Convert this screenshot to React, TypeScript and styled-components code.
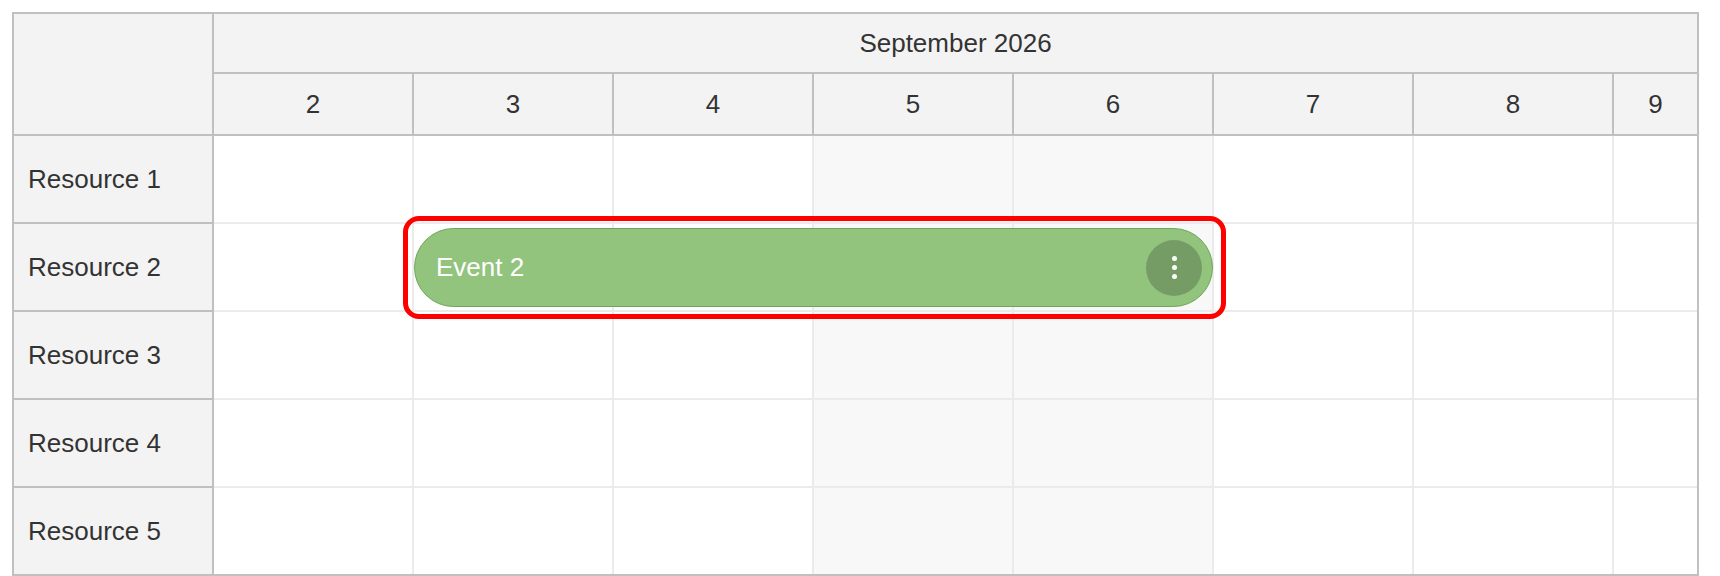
import React from "react";
import styled, { createGlobalStyle } from "styled-components";

const days = [2, 3, 4, 5, 6, 7, 8, 9];
const weekend = [5, 6];
const resources = ["Resource 1", "Resource 2", "Resource 3", "Resource 4", "Resource 5"];

const GlobalStyle = createGlobalStyle`
  body {
    margin: 0;
    font-family: "Liberation Sans", Arial, sans-serif;
    color: #333333;
    background: #ffffff;
  }
`;

export default function App() {
  return (
    <>
      <GlobalStyle />
      <Page>
        <Scheduler>
          <ResourceColumn>
            <Corner />
            {resources.map((name, index) => (
              <ResourceCell key={name} last={index === resources.length - 1}>
                {name}
              </ResourceCell>
            ))}
          </ResourceColumn>
          <Timeline>
            <MonthHeader>September 2026</MonthHeader>
            <DayHeaderRow>
              {days.map((day, index) => (
                <DayHeader key={day} last={index === days.length - 1}>
                  {day}
                </DayHeader>
              ))}
            </DayHeaderRow>
            <Body>
              {resources.map((name, rowIndex) => (
                <GridRow key={name} last={rowIndex === resources.length - 1}>
                  {days.map((day, index) => (
                    <GridCell
                      key={day}
                      weekend={weekend.includes(day)}
                      last={index === days.length - 1}
                    />
                  ))}
                </GridRow>
              ))}
              <Highlight />
              <Event>
                <EventText>Event 2</EventText>
                <MoreButton>
                  <Dot />
                  <Dot />
                  <Dot />
                </MoreButton>
              </Event>
            </Body>
          </Timeline>
        </Scheduler>
      </Page>
    </>
  );
}

const Page = styled.div`
  padding: 12px 0 0 12px;
`;

const Scheduler = styled.div`
  display: flex;
  width: 1687px;
  height: 564px;
  box-sizing: border-box;
  border: 2px solid #c0c0c0;
`;

const ResourceColumn = styled.div`
  display: flex;
  flex-direction: column;
  width: 200px;
  flex-shrink: 0;
  box-sizing: border-box;
  border-right: 2px solid #c0c0c0;
  background: #f3f3f3;
`;

const Corner = styled.div`
  height: 120px;
  border-bottom: 2px solid #c0c0c0;
`;

const ResourceCell = styled.div<{ last: boolean }>`
  display: flex;
  align-items: center;
  height: 86px;
  padding-left: 14px;
  font-size: 26px;
  border-bottom: ${(props) => (props.last ? "none" : "2px solid #c0c0c0")};
`;

const Timeline = styled.div`
  display: flex;
  flex-direction: column;
  flex: 1;
  min-width: 0;
`;

const MonthHeader = styled.div`
  display: flex;
  align-items: center;
  justify-content: center;
  height: 58px;
  font-size: 26px;
  background: #f3f3f3;
  border-bottom: 2px solid #c0c0c0;
`;

const DayHeaderRow = styled.div`
  display: flex;
  height: 60px;
  background: #f3f3f3;
  border-bottom: 2px solid #c0c0c0;
`;

const DayHeader = styled.div<{ last: boolean }>`
  display: flex;
  align-items: center;
  justify-content: center;
  box-sizing: border-box;
  width: ${(props) => (props.last ? "auto" : "200px")};
  flex: ${(props) => (props.last ? "1" : "0 0 auto")};
  font-size: 26px;
  border-right: ${(props) => (props.last ? "none" : "2px solid #c0c0c0")};
`;

const Body = styled.div`
  position: relative;
  display: flex;
  flex-direction: column;
  flex: 1;
`;

const GridRow = styled.div<{ last: boolean }>`
  display: flex;
  height: 86px;
  border-bottom: ${(props) => (props.last ? "none" : "2px solid #ebebeb")};
`;

const GridCell = styled.div<{ weekend: boolean; last: boolean }>`
  box-sizing: border-box;
  width: ${(props) => (props.last ? "auto" : "200px")};
  flex: ${(props) => (props.last ? "1" : "0 0 auto")};
  background: ${(props) => (props.weekend ? "#f8f8f8" : "#ffffff")};
  border-right: ${(props) => (props.last ? "none" : "2px solid #ebebeb")};
`;

const Highlight = styled.div`
  position: absolute;
  left: 189px;
  top: 80px;
  width: 823px;
  height: 103px;
  box-sizing: border-box;
  border: 5.5px solid #ff0000;
  border-radius: 16px;
  pointer-events: none;
`;

const Event = styled.div`
  position: absolute;
  left: 200px;
  top: 92px;
  width: 799px;
  height: 79px;
  box-sizing: border-box;
  display: flex;
  align-items: center;
  justify-content: space-between;
  padding: 0 10px 0 21px;
  background: #93c47d;
  border: 1px solid #6fa55a;
  border-radius: 40px;
`;

const EventText = styled.span`
  color: #ffffff;
  font-size: 26px;
`;

const MoreButton = styled.div`
  display: flex;
  flex-direction: column;
  align-items: center;
  justify-content: center;
  gap: 4px;
  width: 56px;
  height: 56px;
  border-radius: 50%;
  background: rgba(0, 0, 0, 0.2);
`;

const Dot = styled.span`
  width: 5px;
  height: 5px;
  border-radius: 50%;
  background: #ffffff;
`;
